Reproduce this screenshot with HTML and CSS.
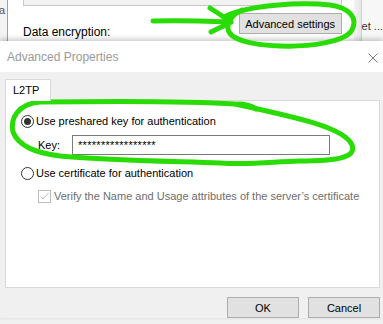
FILE: index.html
```html
<!DOCTYPE html>
<html lang="en">
<head>
    <meta charset="UTF-8">
    <title>Advanced Properties</title>
    <link rel="stylesheet" href="styles.css">
</head>
<body>
    <div class="backdrop">
        <div class="edge-left"><span>a</span></div>
        <div class="page">
            <div class="combo"></div>
            <div class="adv-row">
                <div class="page-label">Data encryption:</div>
                <button class="btn">Advanced settings</button>
            </div>
        </div>
        <div class="edge-right"></div>
        <div class="more">et ...</div>
    </div>

    <div class="dialog">
        <div class="titlebar">
            <span class="title">Advanced Properties</span>
            <svg class="close" width="10" height="10" viewBox="0 0 10 10">
                <path d="M0.5 0.5 L9.5 9.5 M9.5 0.5 L0.5 9.5" stroke="#7a7a7a" stroke-width="1" fill="none"/>
            </svg>
        </div>
        <div class="dlg-body">
            <div class="tabs">
                <div class="tab">L2TP</div>
            </div>
            <div class="panel">
                <div class="opt">
                    <svg class="radio" width="13" height="13" viewBox="0 0 13 13">
                        <circle cx="6.5" cy="6.5" r="6" fill="#fff" stroke="#333" stroke-width="1"/>
                        <circle cx="6.5" cy="6.5" r="3.5" fill="#333"/>
                    </svg>
                    <span>Use preshared key for authentication</span>
                </div>
                <div class="key-row">
                    <span class="key-label">Key:</span>
                    <div class="field">*****************</div>
                </div>
                <div class="opt opt-cert">
                    <svg class="radio" width="13" height="13" viewBox="0 0 13 13">
                        <circle cx="6.5" cy="6.5" r="6" fill="#fff" stroke="#333" stroke-width="1"/>
                    </svg>
                    <span>Use certificate for authentication</span>
                </div>
                <div class="check disabled">
                    <svg class="box" width="13" height="13" viewBox="0 0 13 13">
                        <rect x="0.5" y="0.5" width="12" height="12" fill="#fff" stroke="#bcbcbc"/>
                        <path d="M2.5 6.5 L5 9 L10.5 3" stroke="#bcbcbc" stroke-width="1" fill="none"/>
                    </svg>
                    <span>Verify the Name and Usage attributes of the server’s certificate</span>
                </div>
            </div>
            <div class="actions">
                <button class="btn">OK</button>
                <button class="btn">Cancel</button>
            </div>
        </div>
    </div>

    <!-- hand drawn marker annotations -->
    <svg class="marker" width="383" height="324" viewBox="0 0 383 324">
        <g fill="none" stroke="#29dc05" stroke-width="5" stroke-linecap="round" stroke-linejoin="round">
            <path d="M153 21 C 180 20, 205 21, 230 22"/>
            <path d="M210 8 C 218 13, 225 18, 231 22 C 224 26, 217 29, 211 32"/>
            <path d="M226 16 C 250 5, 300 2, 330 5 C 350 8, 358 18, 352 30 C 345 42, 310 47, 280 46 C 250 45, 229 39, 228 29 C 227 21, 232 15, 242 10"/>
            <path d="M40 102 C 120 101, 190 101, 235 104 C 300 118, 345 128, 352 145 C 357 158, 335 161, 300 161 C 270 162, 250 165, 220 163 C 160 161, 100 160, 60 156 C 35 153, 18 145, 13 132 C 10 118, 18 104, 40 102"/>
            <path d="M238 104 C 245 104, 252 106, 256 109"/>
        </g>
    </svg>
</body>
</html>
```

FILE: styles.css
```css
body {
    margin: 0;
    width: 383px;
    height: 324px;
    overflow: hidden;
    position: relative;
    background: #f0f0f0;
    font-family: 'Liberation Sans', Arial, sans-serif;
    font-size: 11px;
    color: #000;
}
.backdrop {
    display: flex;
    height: 41px;
    overflow: hidden;
    background: #fff;
}
.edge-left {
    width: 7px;
    background: #f3f3f3;
    border-right: 1px solid #a0a0a0;
    overflow: hidden;
    color: #555;
    font-size: 11px;
    line-height: 14px;
    padding-top: 3px;
}
.edge-left span {
    margin-left: -1px;
}
.page {
    width: 347px;
    padding: 0 12px 0 15px;
    box-sizing: border-box;
    background: #fff;
}
.combo {
    height: 6px;
    box-sizing: border-box;
    border: 1px solid #c8c8c8;
    border-top: none;
    background: #f2f2f2;
}
.adv-row {
    display: flex;
    justify-content: space-between;
    align-items: flex-start;
    height: 26px;
    margin-top: 7px;
}
.adv-row .btn {
    width: 103px;
}
.page-label {
    align-self: flex-end;
    font-size: 12px;
    line-height: 14px;
    white-space: nowrap;
}
.edge-right {
    width: 7px;
    background: linear-gradient(to right, #f4f4f4, #e6e6e6);
    border-right: 1px solid #d0d0d0;
}
.more {
    flex: 1;
    background: #f7f7f7;
    padding-top: 20px;
    color: #333;
    white-space: nowrap;
}
.btn {
    height: 21px;
    padding: 0;
    background: #e1e1e1;
    border: 1px solid #adadad;
    font-family: inherit;
    font-size: 11px;
    color: #000;
}
.dialog {
    position: relative;
    box-shadow: 0 -2px 5px rgba(0, 0, 0, 0.22);
}
.titlebar {
    height: 31px;
    background: #fff;
    display: flex;
    align-items: center;
    justify-content: space-between;
    padding: 0 5px 0 7px;
}
.title {
    color: #999;
    font-size: 12px;
}
.close {
    margin-top: 2px;
}
.dlg-body {
    padding: 7px 3px 0 5px;
}
.tabs {
    display: flex;
}
.tab {
    position: relative;
    z-index: 1;
    width: 46px;
    height: 22px;
    box-sizing: border-box;
    margin-bottom: -1px;
    padding: 4px 0 0 7px;
    background: #fff;
    border: 1px solid #d9d9d9;
    border-bottom: none;
}
.panel {
    height: 188px;
    box-sizing: border-box;
    background: #fff;
    border: 1px solid #d9d9d9;
    padding: 12px 0 0 15px;
}
.opt, .check {
    display: flex;
    align-items: center;
    gap: 2px;
    height: 16px;
}
.key-row {
    display: flex;
    align-items: center;
    margin: 6px 0 0 17px;
}
.key-label {
    width: 34px;
}
.field {
    width: 258px;
    height: 20px;
    box-sizing: border-box;
    border: 1px solid #7a7a7a;
    padding: 3px 0 0 5px;
    letter-spacing: 0.3px;
}
.opt-cert {
    margin-top: 10px;
}
.check {
    margin: 7px 0 0 17px;
    gap: 3px;
}
.check.disabled {
    color: #6d6d6d;
}
.actions {
    display: flex;
    justify-content: flex-end;
    gap: 9px;
    margin-top: 9px;
}
.actions .btn {
    width: 72px;
}
.marker {
    position: absolute;
    left: 0;
    top: 0;
    pointer-events: none;
}
```
